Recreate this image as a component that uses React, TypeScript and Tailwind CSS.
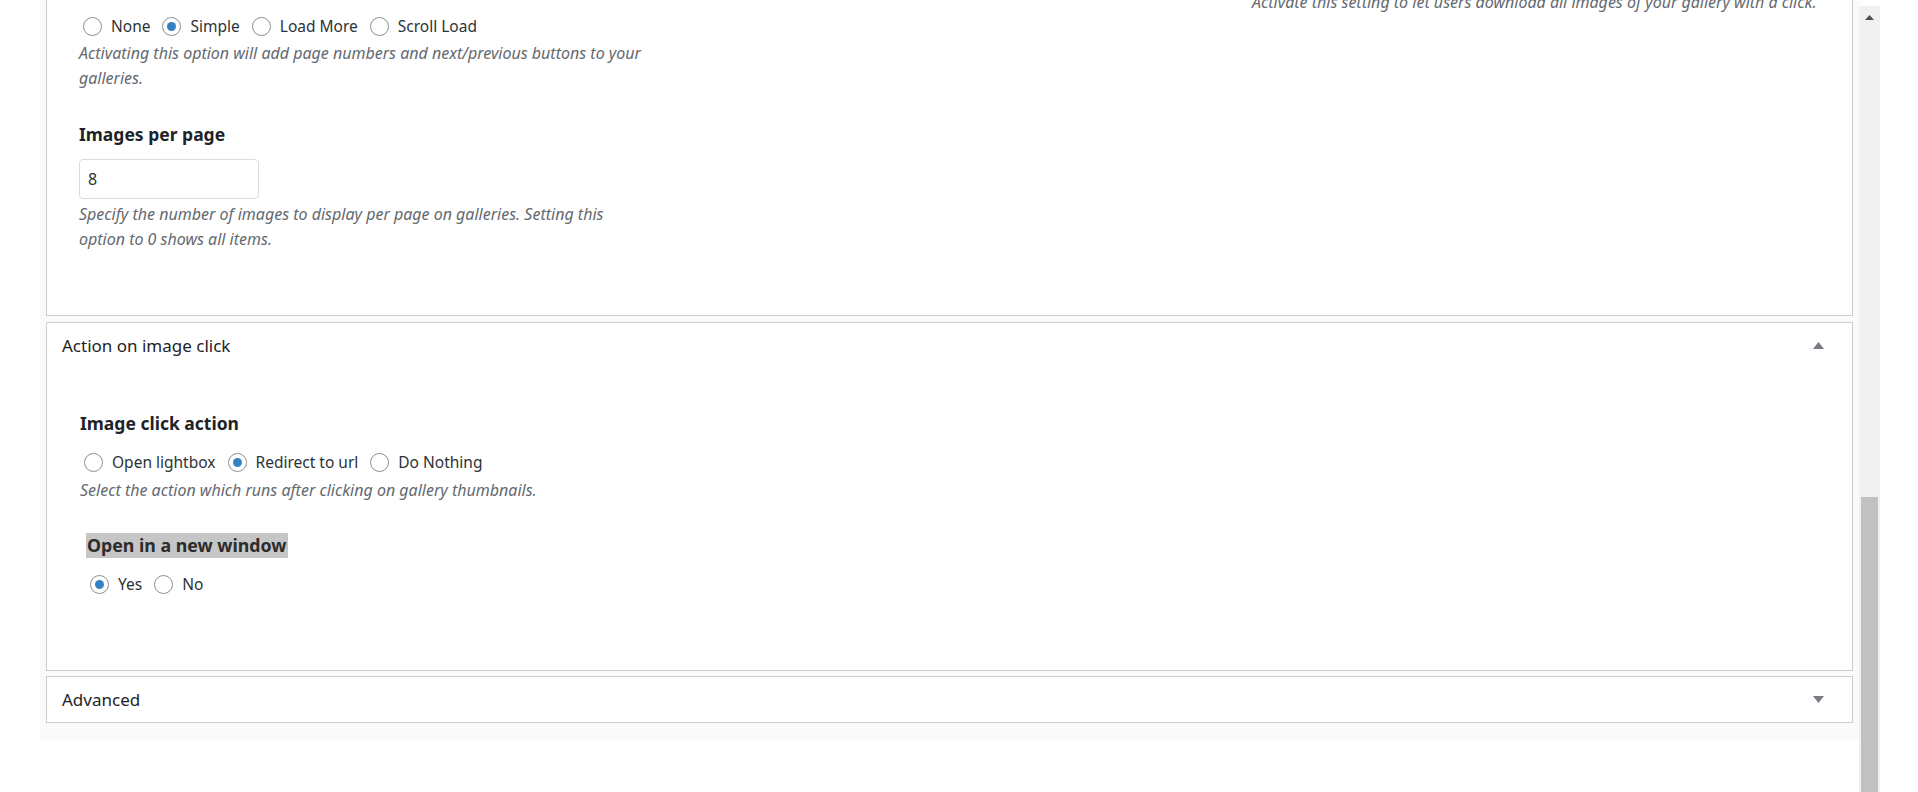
import React from "react"

function Radio({ checked = false }: { checked?: boolean }) {
  return (
    <span className="flex h-[19px] w-[19px] shrink-0 items-center justify-center rounded-full border border-[#8c8f94] bg-white">
      {checked && <span className="h-[9px] w-[9px] rounded-full bg-[#3582c4]" />}
    </span>
  )
}

function RadioGroup({
  options,
  value,
  className = "",
}: {
  options: string[]
  value: string
  className?: string
}) {
  return (
    <div className={`flex h-[20px] items-center gap-[12px] ${className}`}>
      {options.map((o) => (
        <label key={o} className="flex items-center gap-[9px] text-[15.5px] leading-[20px] text-[#2c3338]">
          <Radio checked={o === value} />
          <span>{o}</span>
        </label>
      ))}
    </div>
  )
}

function Caret({ up }: { up?: boolean }) {
  return (
    <svg width="11" height="7" viewBox="0 0 11 7" className="mr-[28px]">
      <path d={up ? "M0 7 L5.5 0 L11 7 Z" : "M0 0 L5.5 7 L11 0 Z"} fill="#787c82" />
    </svg>
  )
}

export default function App() {
  return (
    <div className="flex h-[792px] w-[1918px] overflow-hidden bg-white font-['Noto_Sans','Liberation_Sans',sans-serif] text-[#1d2327]">
      <div className="ml-[40px] flex w-[1819px] flex-col gap-[6px] self-start bg-[#fafafa] px-[6px] pb-[17px]">
        {/* pagination panel (scrolled, top cut off) */}
        <div className="-mt-[40px] flex border border-[#cdcdcd] bg-white">
          <div className="ml-[32px] w-[1173px] pt-[55px] pb-[63px]">
            <RadioGroup className="ml-[4px]" options={["None", "Simple", "Load More", "Scroll Load"]} value="Simple" />
            <p className="mt-[5px] text-[16px] leading-[25px] italic text-[#646970]">
              Activating this option will add page numbers and next/previous buttons to your
              <br />
              galleries.
            </p>
            <h3 className="mt-[31px] text-[17.5px] leading-[24px] font-bold text-[#1d2327]">Images per page</h3>
            <input
              readOnly
              value="8"
              className="mt-[13px] block h-[40px] w-[180px] rounded-[4px] border border-[#dcdcde] bg-white px-[8px] text-[16px] text-[#2c3338] outline-none"
            />
            <p className="mt-[3px] text-[16px] leading-[25px] italic text-[#646970]">
              Specify the number of images to display per page on galleries. Setting this
              <br />
              option to 0 shows all items.
            </p>
          </div>
          <div className="flex-1 pt-[29px]">
            <p className="text-[16px] leading-[25px] italic text-[#646970]">
              Activate this setting to let users download all images of your gallery with a click.
            </p>
          </div>
        </div>

        {/* action on image click */}
        <div className="border border-[#cdcdcd] bg-white">
          <div className="flex h-[45px] items-center justify-between pl-[15px]">
            <span className="text-[17px] text-[#1d2327]">Action on image click</span>
            <Caret up />
          </div>
          <div className="pl-[33px] pt-[43px] pb-[76px]">
            <h3 className="text-[17.5px] leading-[24px] font-bold text-[#1d2327]">Image click action</h3>
            <RadioGroup
              className="mt-[17px] ml-[4px]"
              options={["Open lightbox", "Redirect to url", "Do Nothing"]}
              value="Redirect to url"
            />
            <p className="mt-[6px] text-[16px] leading-[25px] italic text-[#646970]">
              Select the action which runs after clicking on gallery thumbnails.
            </p>
            <h3 className="mt-[30px] ml-[6px] w-fit bg-[#c6c6c6] px-[1px] text-[17.75px] leading-[25px] font-bold text-[#2c2c2c]">
              Open in a new window
            </h3>
            <RadioGroup className="mt-[16px] ml-[10px]" options={["Yes", "No"]} value="Yes" />
          </div>
        </div>

        {/* advanced */}
        <div className="-mt-[1px] flex h-[47px] items-center justify-between border border-[#cdcdcd] bg-white pl-[15px]">
          <span className="text-[17px] text-[#1d2327]">Advanced</span>
          <Caret />
        </div>
      </div>

      {/* browser scrollbar */}
      <div className="mt-[6px] flex h-[786px] w-[21px] flex-col items-center bg-[#f0f0f0]">
        <svg width="9" height="5" viewBox="0 0 9 5" className="mt-[9px]">
          <path d="M0 5 L4.5 0 L9 5 Z" fill="#505050" />
        </svg>
        <div className="mt-[477px] w-[17px] flex-1 bg-[#c1c1c1]" />
      </div>
    </div>
  )
}
